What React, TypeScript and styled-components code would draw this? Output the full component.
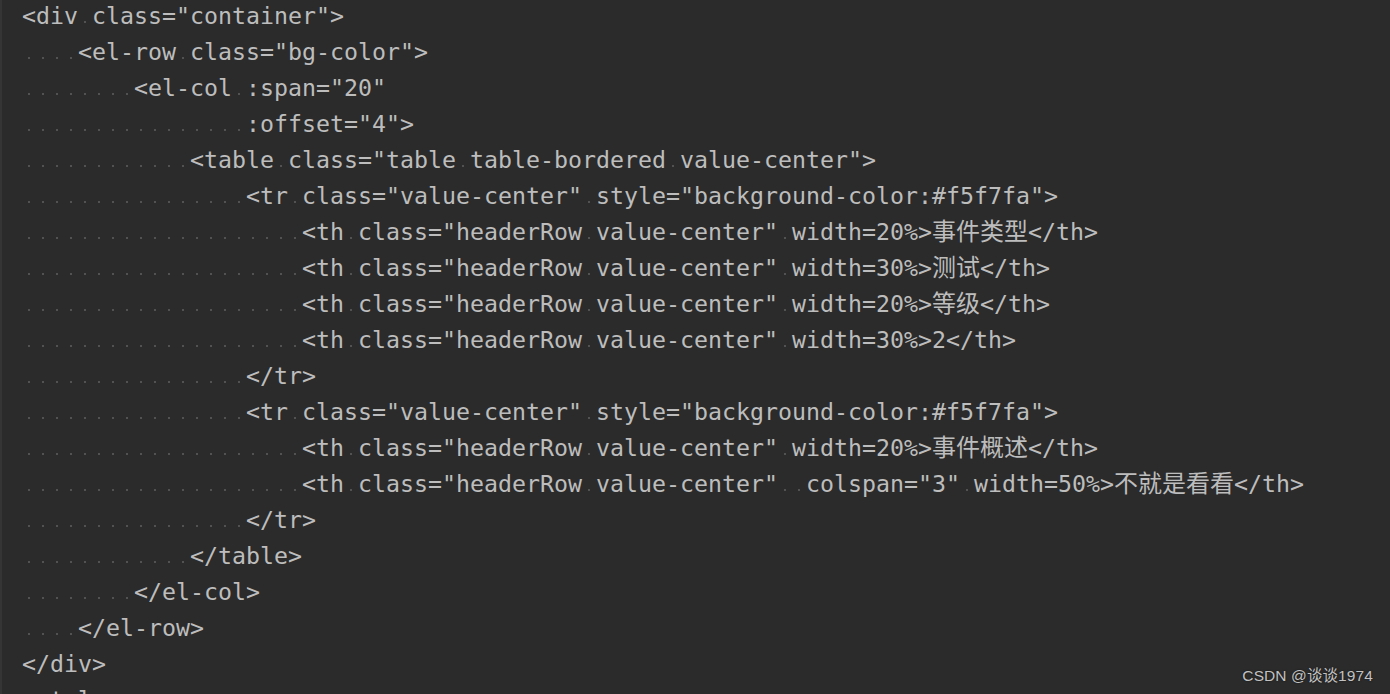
import React from "react";
import styled, { createGlobalStyle } from "styled-components";

const Global = createGlobalStyle`
  html, body {
    margin: 0;
    padding: 0;
    background: #2b2b2b;
    overflow: hidden;
  }
`;

const Editor = styled.div`
  position: relative;
  width: 1390px;
  height: 694px;
  box-sizing: border-box;
  background: #2b2b2b;
  border-left: 2px solid #353535;
  overflow: hidden;
`;

const Code = styled.pre`
  margin: -2px 0 0 0;
  padding: 0 0 0 20px;
  font-family: "DejaVu Sans Mono", "Liberation Mono", monospace;
  font-size: 23.25px;
  line-height: 36px;
  color: #bdbdbd;
  white-space: pre;
`;

const Line = styled.div`
  height: 36px;
`;

const Space = styled.span`
  position: relative;
  &::after {
    content: "";
    position: absolute;
    left: 6px;
    top: 18.5px;
    width: 2px;
    height: 2px;
    background: #525252;
  }
`;

const Cjk = styled.span`
  font-family: "Noto Sans CJK SC", sans-serif;
  font-size: 24px;
  line-height: 24px;
`;

const Watermark = styled.div`
  position: absolute;
  right: 17px;
  bottom: 9px;
  font-family: "Liberation Sans", "Noto Sans CJK SC", sans-serif;
  font-size: 15.5px;
  color: #c2c2c2;
  text-shadow: 0 0 2px rgba(0, 0, 0, 0.6);
  letter-spacing: 0.1px;
`;

const lines: string[] = [
  '<div class="container">',
  '    <el-row class="bg-color">',
  '        <el-col :span="20"',
  '                :offset="4">',
  '            <table class="table table-bordered value-center">',
  '                <tr class="value-center" style="background-color:#f5f7fa">',
  '                    <th class="headerRow value-center" width=20%>事件类型</th>',
  '                    <th class="headerRow value-center" width=30%>测试</th>',
  '                    <th class="headerRow value-center" width=20%>等级</th>',
  '                    <th class="headerRow value-center" width=30%>2</th>',
  '                </tr>',
  '                <tr class="value-center" style="background-color:#f5f7fa">',
  '                    <th class="headerRow value-center" width=20%>事件概述</th>',
  '                    <th class="headerRow value-center"  colspan="3" width=50%>不就是看看</th>',
  '                </tr>',
  '            </table>',
  '        </el-col>',
  '    </el-row>',
  '</div>',
  '<style>',
];

const isCjk = (c: string) => /[\u3400-\u9fff\uff00-\uffef]/.test(c);

function renderLine(text: string): React.ReactNode[] {
  const out: React.ReactNode[] = [];
  let buf = "";
  let kind: "txt" | "cjk" | null = null;
  const flush = (key: number) => {
    if (!buf) return;
    out.push(kind === "cjk" ? <Cjk key={key}>{buf}</Cjk> : <span key={key}>{buf}</span>);
    buf = "";
  };
  [...text].forEach((c, i) => {
    if (c === " ") {
      flush(i * 2);
      kind = null;
      out.push(<Space key={i * 2 + 1}> </Space>);
      return;
    }
    const k = isCjk(c) ? "cjk" : "txt";
    if (k !== kind) {
      flush(i * 2);
      kind = k;
    }
    buf += c;
  });
  flush(text.length * 2 + 5);
  return out;
}

export default function App() {
  return (
    <>
      <Global />
      <Editor>
        <Code>
          {lines.map((l, i) => (
            <Line key={i}>{renderLine(l)}</Line>
          ))}
        </Code>
        <Watermark>CSDN @谈谈1974</Watermark>
      </Editor>
    </>
  );
}
